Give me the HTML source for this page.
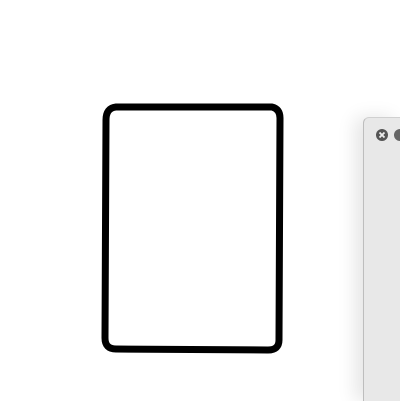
<!DOCTYPE html>
<html><head><style>
html,body{margin:0;padding:0;width:400px;height:400px;overflow:hidden;background:#fff;}
.panel{position:absolute;left:363px;top:117px;width:37px;height:283px;background:#e8e8e8;border-top-left-radius:6px;border-left:1px solid #bdbdbd;border-top:1px solid #d0d0d0;box-shadow:-8px 0 18px rgba(0,0,0,0.10);}
.btn{position:absolute;width:12px;height:12px;border-radius:50%;background:#555;top:129px;}
</style></head><body>
<svg width="400" height="400" style="position:absolute;left:0;top:0">
<path d="M116 107 L272 107 Q280 109 280 118 L279 340 Q279 350 268 350 L116 349 Q105 349 105 338 L106 120 Q106 108 116 107 Z" fill="#fff" stroke="#000" stroke-width="7" stroke-linejoin="round"/>
</svg>
<div class="panel"></div>
<div class="btn" style="left:376px;"><svg width="12" height="12" style="position:absolute;left:0;top:0"><path d="M3.5 3.5 L8.5 8.5 M8.5 3.5 L3.5 8.5" stroke="#eee" stroke-width="1.8"/></svg></div>
<div class="btn" style="left:394px;background:#666;"></div>
</body></html>
